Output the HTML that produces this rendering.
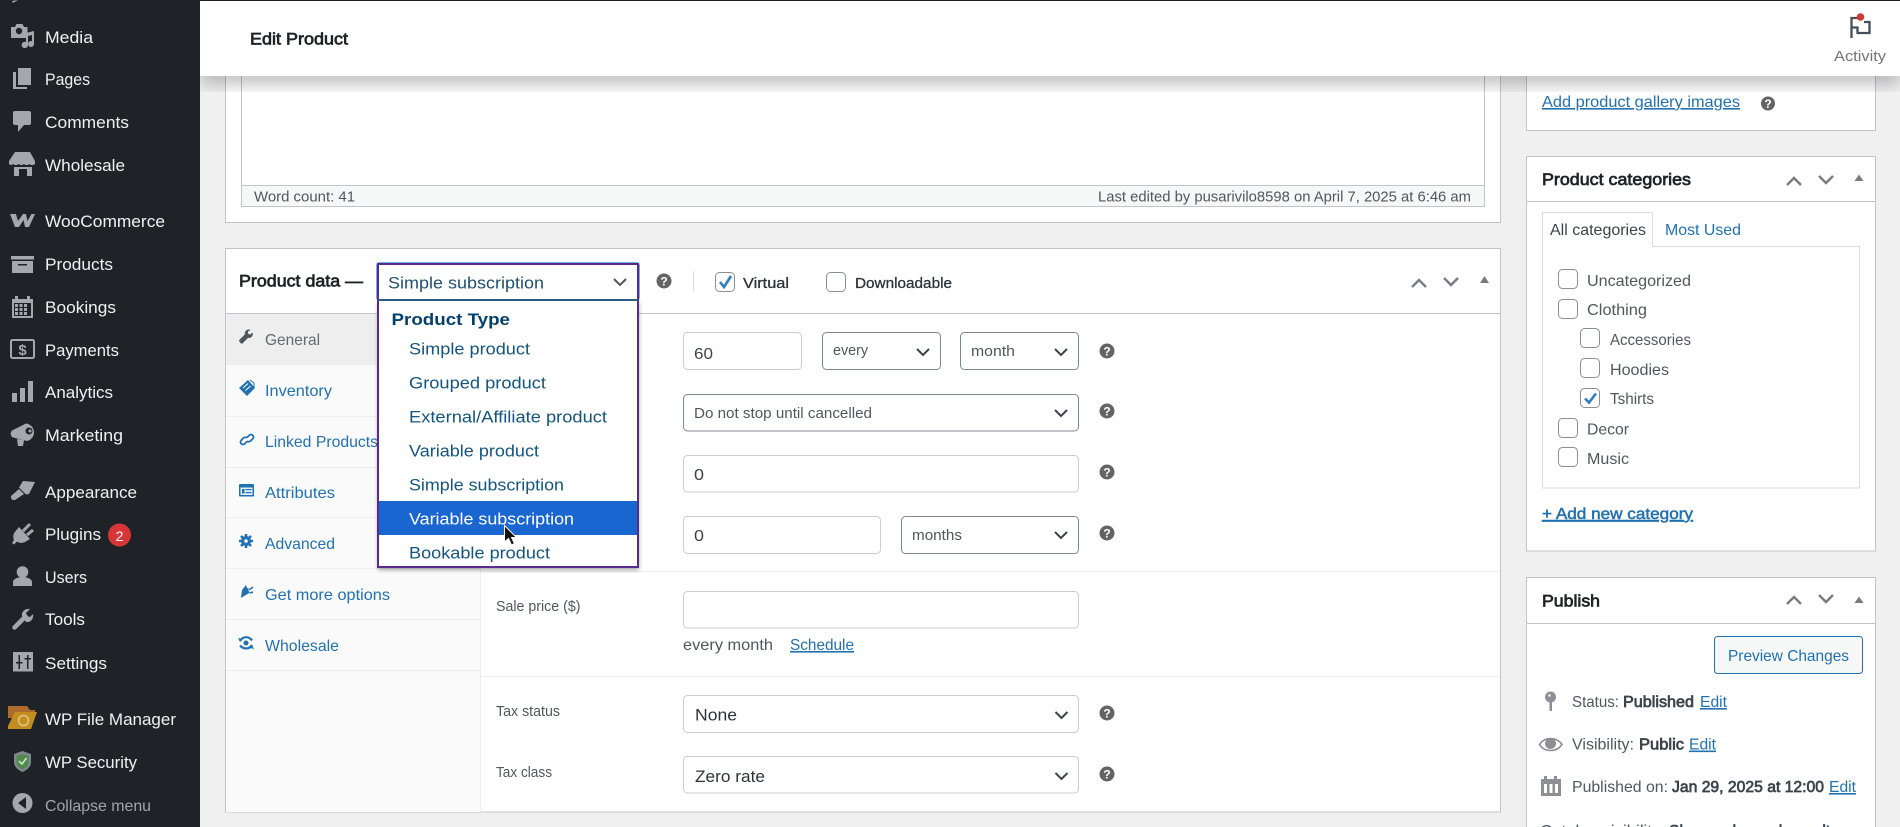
<!DOCTYPE html>
<html lang="en">
<head>
<meta charset="utf-8">
<title>Edit Product</title>
<style>
html,body{margin:0;padding:0;width:1900px;height:827px;overflow:hidden;background:#f0f0f1}
svg{display:block;font-family:"Liberation Sans",sans-serif}
.s{font-size:17px;fill:#f0f0f1}
.i{fill:#a4a8ac}
.d{fill:#1d2327}
.t{font-size:16px;fill:#2271b1}
.l{font-size:15px;fill:#50575e}
.v{font-size:16px;fill:#3c434a}
.h{font-size:17px;fill:#1d2327;stroke:#1d2327;stroke-width:.7px}
.o{font-size:17px;fill:#135580}
.c{font-size:16px;fill:#50575e}
.u{text-decoration:underline}
.b{fill:#3c434a;stroke:#3c434a;stroke-width:.7px}
.a{font-size:16px;fill:#2271b1}
.box{fill:#fff;stroke:#c3c4c7;stroke-width:1}
.inp{fill:#fff;stroke:#ccc;stroke-width:1}
.sel{fill:#fff;stroke:#7d8790;stroke-width:1}
.chev{fill:none;stroke:#3c434a;stroke-width:2}
.arr{fill:none;stroke:#787c82;stroke-width:2.4}
.tri{fill:#787c82}
.cb{fill:#fff;stroke:#8c8f94;stroke-width:1}
.chk{fill:none;stroke:#2f7fc1;stroke-width:2.6}
.hc{fill:#646464}
.q{font-size:12px;font-weight:700;fill:#fff;text-anchor:middle}
.ti{fill:#2271b1}
.sep{fill:#eeeeee}
</style>
</head>
<body>
<svg width="1900" height="827" viewBox="0 0 1900 827" xmlns="http://www.w3.org/2000/svg">
<defs>
<filter id="sh" x="-5%" y="-50%" width="110%" height="220%"><feGaussianBlur stdDeviation="9"/></filter>
<filter id="ds" x="-10%" y="-10%" width="120%" height="120%"><feGaussianBlur stdDeviation="2"/></filter>
</defs>
<rect width="1900" height="827" fill="#f0f0f1"/>

<!-- editor box -->
<rect class="box" x="225.5" y="20" width="1275" height="202.5"/>
<rect x="241.5" y="20" width="1243" height="186.5" fill="#fff" stroke="#c3c4c7"/>
<rect x="241.5" y="185.5" width="1243" height="21" fill="#f6f7f7" stroke="#c3c4c7"/>
<text x="254" y="201.5" font-size="15" fill="#50575e" textLength="101" lengthAdjust="spacingAndGlyphs">Word count: 41</text>
<text x="1098" y="201.5" font-size="15" fill="#50575e" textLength="373" lengthAdjust="spacingAndGlyphs">Last edited by pusarivilo8598 on April 7, 2025 at 6:46 am</text>

<!-- product data box -->
<rect class="box" x="225.5" y="248.5" width="1275" height="563.5"/>
<rect x="226" y="313" width="1274" height="1" fill="#c3c4c7"/>
<rect x="226" y="314" width="255" height="498" fill="#fafafa"/>
<rect x="480" y="314" width="1" height="498" fill="#eeeeee"/>
<rect x="226" y="314" width="255" height="51" fill="#eeeeee"/>
<rect class="sep" x="226" y="416" width="255" height="1"/>
<rect class="sep" x="226" y="467" width="255" height="1"/>
<rect class="sep" x="226" y="517" width="255" height="1"/>
<rect class="sep" x="226" y="568" width="255" height="1"/>
<rect class="sep" x="226" y="619" width="255" height="1"/>
<rect class="sep" x="226" y="670" width="255" height="1"/>
<rect class="sep" x="481" y="571" width="1019" height="1"/>
<rect class="sep" x="481" y="676" width="1019" height="1"/>

<text class="h" x="239" y="286.500" textLength="124" lengthAdjust="spacingAndGlyphs">Product data —</text>

<circle class="hc" cx="664" cy="281" r="7.5"/><text class="q" x="664" y="285.5">?</text>
<rect x="693" y="271" width="1" height="20" fill="#dcdcde"/>
<rect class="cb" x="715.5" y="272.5" width="19" height="19" rx="4"/>
<path class="chk" d="M720 282l4 5 7-11"/>
<text x="743" y="288" font-size="15" fill="#2c3338" stroke="#2c3338" stroke-width=".3" textLength="46" lengthAdjust="spacingAndGlyphs">Virtual</text>
<rect class="cb" x="826.5" y="272.5" width="19" height="19" rx="4"/>
<text x="855" y="288" font-size="15" fill="#2c3338" stroke="#2c3338" stroke-width=".3" textLength="97" lengthAdjust="spacingAndGlyphs">Downloadable</text>
<path class="arr" d="M1412 287l7-7 7 7"/>
<path class="arr" d="M1444 278l7 7 7-7"/>
<path class="tri" d="M1480 283l4.5-7 4.5 7z"/>

<!-- tabs -->
<path d="M240.5 342.500l1.500 1 6-6c2.500.7 5-1.500 4.500-4.500l-2.500 2-2-1-.5-2.500 2.500-1.500c-3-1-5.500 1.500-4.800 4.500l-6 6z" fill="#50575e" stroke="#50575e" stroke-width=".6"/>
<text x="265" y="345" font-size="16" fill="#646970" textLength="55" lengthAdjust="spacingAndGlyphs">General</text>

<path class="ti" d="M239 388l9-8 7 8-8 8z"/><path d="M250 380l4 3v5" fill="none" stroke="#2271b1"/>
<path d="M243 388l5-4.500M245.500 390.500l5-4.500" stroke="#fff" stroke-width="1"/>
<text class="t" x="265" y="396" textLength="67" lengthAdjust="spacingAndGlyphs">Inventory</text>

<path d="M247 437.500l2.500-2.500a2.500 2.500 0 0 1 3.500 3.500l-2.500 2.500a2.500 2.500 0 0 1-3.500 0M247 441.500l-2.500 2.500a2.500 2.500 0 0 1-3.500-3.500l2.500-2.500a2.500 2.500 0 0 1 3.500 0" fill="none" stroke="#2271b1" stroke-width="1.800"/>
<text class="t" x="265" y="447" textLength="113" lengthAdjust="spacingAndGlyphs">Linked Products</text>

<rect class="ti" x="239" y="484" width="15" height="12.500" rx="1"/>
<rect x="240.500" y="487.500" width="12" height="7.500" fill="#e6f0f7"/>
<rect class="ti" x="245.500" y="489" width="6" height="1.200"/><rect class="ti" x="245.500" y="492" width="6" height="1.200"/><rect class="ti" x="242" y="489" width="2.500" height="4.500"/>
<text class="t" x="265" y="498" textLength="70" lengthAdjust="spacingAndGlyphs">Attributes</text>

<circle class="ti" cx="246" cy="541" r="5"/>
<path d="M246 534v14M239 541h14M241 536l10 10M251 536l-10 10" stroke="#2271b1" stroke-width="2.600"/>
<circle cx="246" cy="541" r="1.800" fill="#fafafa"/>
<text class="t" x="265" y="549" textLength="70" lengthAdjust="spacingAndGlyphs">Advanced</text>

<path class="ti" d="M241 598l1-8 4-5 1 3 2 .5-1 1.500 2 2.500-5 3z"/><path d="M249 590l4-3M250 593l3-1" stroke="#2271b1" stroke-width="1.500"/>
<text class="t" x="265" y="600" textLength="125" lengthAdjust="spacingAndGlyphs">Get more options</text>

<path d="M240 641c3-5 9-5 12-.5M252 645c-3 5-9 4-12 .5" fill="none" stroke="#2271b1" stroke-width="2.200"/><circle class="ti" cx="246" cy="643" r="2.500"/>
<path class="ti" d="M238 638l4 1-2 3zM254 649l-4-1 2-3z"/>
<text class="t" x="265" y="651" textLength="74" lengthAdjust="spacingAndGlyphs">Wholesale</text>

<!-- fields -->
<rect class="inp" x="683.500" y="332.500" width="118" height="37" rx="4"/>
<text class="v" x="694" y="359" textLength="19" lengthAdjust="spacingAndGlyphs">60</text>
<rect class="sel" x="822.500" y="332.500" width="118" height="37" rx="4"/>
<text class="l" x="833" y="355" textLength="35" lengthAdjust="spacingAndGlyphs">every</text>
<path class="chev" d="M917 349l6 6 6-6"/>
<rect class="sel" x="960.500" y="332.500" width="118" height="37" rx="4"/>
<text class="l" x="971" y="356" textLength="44" lengthAdjust="spacingAndGlyphs">month</text>
<path class="chev" d="M1055 349l6 6 6-6"/>
<circle class="hc" cx="1107" cy="351" r="7.500"/><text class="q" x="1107" y="355.500">?</text>

<rect class="sel" x="683.500" y="394.500" width="395" height="36.500" rx="4"/>
<text class="l" x="694" y="418" textLength="178" lengthAdjust="spacingAndGlyphs">Do not stop until cancelled</text>
<path class="chev" d="M1055 410l6 6 6-6"/>
<circle class="hc" cx="1107" cy="411" r="7.500"/><text class="q" x="1107" y="415.500">?</text>

<rect class="inp" x="683.500" y="455.500" width="395" height="36.500" rx="4"/>
<text class="v" x="694" y="480" textLength="10" lengthAdjust="spacingAndGlyphs">0</text>
<circle class="hc" cx="1107" cy="472" r="7.500"/><text class="q" x="1107" y="476.500">?</text>

<rect class="inp" x="683.500" y="516.500" width="197" height="37" rx="4"/>
<text class="v" x="694" y="541" textLength="10" lengthAdjust="spacingAndGlyphs">0</text>
<rect class="sel" x="901.500" y="516.500" width="177" height="37" rx="4"/>
<text class="l" x="912" y="540" textLength="50" lengthAdjust="spacingAndGlyphs">months</text>
<path class="chev" d="M1055 532l6 6 6-6"/>
<circle class="hc" cx="1107" cy="533" r="7.500"/><text class="q" x="1107" y="537.500">?</text>

<text class="l" x="496" y="611" textLength="84.500" lengthAdjust="spacingAndGlyphs">Sale price ($)</text>
<rect class="inp" x="683.500" y="591.500" width="395" height="36.500" rx="4"/>
<text class="c" x="683" y="650" textLength="90" lengthAdjust="spacingAndGlyphs">every month</text>
<text class="a u" x="790" y="650" textLength="64" lengthAdjust="spacingAndGlyphs">Schedule</text>

<text class="l" x="496" y="716" textLength="64" lengthAdjust="spacingAndGlyphs">Tax status</text>
<rect class="inp" x="683.500" y="695.500" width="395" height="37" rx="4"/>
<text x="695" y="720.500" font-size="17" fill="#2c3338" textLength="42" lengthAdjust="spacingAndGlyphs">None</text>
<path class="chev" d="M1055.500 712l6 6 6-6"/>
<circle class="hc" cx="1107" cy="713" r="7.500"/><text class="q" x="1107" y="717.500">?</text>

<text class="l" x="496" y="777" textLength="56" lengthAdjust="spacingAndGlyphs">Tax class</text>
<rect class="inp" x="683.500" y="756.500" width="395" height="36.500" rx="4"/>
<text x="695" y="782" font-size="17" fill="#2c3338" textLength="70" lengthAdjust="spacingAndGlyphs">Zero rate</text>
<path class="chev" d="M1055.500 773l6 6 6-6"/>
<circle class="hc" cx="1107" cy="774" r="7.500"/><text class="q" x="1107" y="778.500">?</text>

<!-- select + dropdown -->
<rect x="378" y="303" width="261" height="267" fill="#000" opacity=".35" filter="url(#ds)"/>
<rect x="376.500" y="262.500" width="263" height="38" rx="3" fill="none" stroke="#72aee6" stroke-width="1"/>
<rect x="378" y="264" width="260" height="36" fill="#fff" stroke="#5a2a8c" stroke-width="2"/>
<rect x="378" y="299" width="260" height="2" fill="#2b5a85"/>
<text x="388" y="288.500" font-size="17" fill="#20506f" textLength="156" lengthAdjust="spacingAndGlyphs">Simple subscription</text>
<path fill="none" stroke="#50575e" stroke-width="2" d="M614 279l6 6 6-6"/>
<rect x="378" y="301" width="260" height="266" fill="#fff"/>
<path d="M378 301v266h260V301" fill="none" stroke="#5a2a8c" stroke-width="2"/>
<text x="391.500" y="325" font-size="17" font-weight="700" fill="#04406b" textLength="118.500" lengthAdjust="spacingAndGlyphs">Product Type</text>
<text class="o" x="409" y="354.500" textLength="121" lengthAdjust="spacingAndGlyphs">Simple product</text>
<text class="o" x="409" y="388.500" textLength="137" lengthAdjust="spacingAndGlyphs">Grouped product</text>
<text class="o" x="409" y="422.500" textLength="198" lengthAdjust="spacingAndGlyphs">External/Affiliate product</text>
<text class="o" x="409" y="456.500" textLength="130" lengthAdjust="spacingAndGlyphs">Variable product</text>
<text class="o" x="409" y="490.500" textLength="155" lengthAdjust="spacingAndGlyphs">Simple subscription</text>
<rect x="379" y="501" width="258" height="34" fill="#1a66d1"/>
<text x="409" y="524.500" font-size="17" fill="#fff" textLength="165" lengthAdjust="spacingAndGlyphs">Variable subscription</text>
<text class="o" x="409" y="558.500" textLength="141" lengthAdjust="spacingAndGlyphs">Bookable product</text>
<path d="M504.500 525.500v16.500l4-3.500 3 6.500 3-1.500-3-6h5z" fill="#111" stroke="#fff" stroke-width="1"/>

<!-- right col -->
<rect class="box" x="1526.500" y="20" width="349" height="110.500"/>
<text class="a u" x="1542" y="107" textLength="198" lengthAdjust="spacingAndGlyphs">Add product gallery images</text>
<circle class="hc" cx="1768" cy="103.500" r="7"/><text class="q" x="1768" y="108">?</text>

<rect class="box" x="1526.500" y="156.500" width="349" height="394.500"/>
<rect x="1527" y="201" width="348" height="1" fill="#c3c4c7"/>
<text class="h" x="1542" y="185" textLength="149" lengthAdjust="spacingAndGlyphs">Product categories</text>
<path class="arr" d="M1787 185l7-7 7 7"/>
<path class="arr" d="M1819 176l7 7 7-7"/>
<path class="tri" d="M1854.500 181l4.500-6.500 4.500 6.500z"/>
<rect x="1542.500" y="246.500" width="317" height="241.500" fill="#fff" stroke="#dcdcde"/>
<path d="M1542.500 247v-34.500h110v34.500" fill="#fff" stroke="#dcdcde"/>
<text x="1550" y="235" font-size="16" fill="#3c434a" textLength="96" lengthAdjust="spacingAndGlyphs">All categories</text>
<text class="t" x="1665" y="235" textLength="76" lengthAdjust="spacingAndGlyphs">Most Used</text>

<rect class="cb" x="1558.500" y="269.500" width="19" height="19" rx="4"/>
<text class="c" x="1587" y="286" textLength="104" lengthAdjust="spacingAndGlyphs">Uncategorized</text>
<rect class="cb" x="1558.500" y="299.500" width="19" height="19" rx="4"/>
<text class="c" x="1587" y="315" textLength="60" lengthAdjust="spacingAndGlyphs">Clothing</text>
<rect class="cb" x="1580.500" y="328.500" width="19" height="19" rx="4"/>
<text class="c" x="1610" y="345" textLength="81" lengthAdjust="spacingAndGlyphs">Accessories</text>
<rect class="cb" x="1580.500" y="358.500" width="19" height="19" rx="4"/>
<text class="c" x="1610" y="375" textLength="59" lengthAdjust="spacingAndGlyphs">Hoodies</text>
<rect class="cb" x="1580.500" y="388.500" width="19" height="19" rx="4"/>
<path class="chk" d="M1585 398.500l4 4 7-9"/>
<text class="c" x="1610" y="404" textLength="44" lengthAdjust="spacingAndGlyphs">Tshirts</text>
<rect class="cb" x="1558.500" y="418.500" width="19" height="19" rx="4"/>
<text class="c" x="1587" y="434.500" textLength="42" lengthAdjust="spacingAndGlyphs">Decor</text>
<rect class="cb" x="1558.500" y="447.500" width="19" height="19" rx="4"/>
<text class="c" x="1587" y="464" textLength="42" lengthAdjust="spacingAndGlyphs">Music</text>
<text x="1542" y="519" font-size="16" fill="#2271b1" stroke="#2271b1" stroke-width=".5" class="u" textLength="151" lengthAdjust="spacingAndGlyphs">+ Add new category</text>

<rect class="box" x="1526.500" y="577.500" width="349" height="270"/>
<rect x="1527" y="623" width="348" height="1" fill="#c3c4c7"/>
<text class="h" x="1542" y="606.500" textLength="58" lengthAdjust="spacingAndGlyphs">Publish</text>
<path class="arr" d="M1787 604l7-7 7 7"/>
<path class="arr" d="M1819 595l7 7 7-7"/>
<path class="tri" d="M1854.500 603l4.500-6.500 4.500 6.500z"/>
<rect x="1714.500" y="636.500" width="148" height="37" rx="3" fill="#f6f7f7" stroke="#2271b1"/>
<text class="t" x="1728" y="661" textLength="121" lengthAdjust="spacingAndGlyphs">Preview Changes</text>

<circle cx="1550.500" cy="697" r="5.500" fill="#8c8f94"/><rect x="1549.500" y="700" width="2.500" height="11" fill="#8c8f94"/><circle cx="1549.500" cy="695.500" r="1.200" fill="#fff"/>
<text class="c" x="1572" y="707" textLength="47" lengthAdjust="spacingAndGlyphs">Status:</text>
<text class="c b" x="1623" y="707" textLength="71" lengthAdjust="spacingAndGlyphs">Published</text>
<text class="a u" x="1700" y="707" textLength="27" lengthAdjust="spacingAndGlyphs">Edit</text>

<path d="M1539.500 744.500c5-8 17-8 22.500 0c-5.500 8-17.500 8-22.500 0z" fill="none" stroke="#8c8f94" stroke-width="1.600"/><circle cx="1550.500" cy="743.500" r="5.500" fill="#8c8f94"/>
<text class="c" x="1572" y="749.500" textLength="62" lengthAdjust="spacingAndGlyphs">Visibility:</text>
<text class="c b" x="1639" y="749.500" textLength="45" lengthAdjust="spacingAndGlyphs">Public</text>
<text class="a u" x="1689" y="749.500" textLength="27" lengthAdjust="spacingAndGlyphs">Edit</text>

<path d="M1541 779h3v-3h3v3h7v-3h3v3h4v17h-20z" fill="#8c8f94"/><path d="M1544 784h3v9h-3zM1549.500 784h3v9h-3zM1555 784h3v9h-3z" fill="#fff"/>
<text class="c" x="1572" y="792" textLength="96" lengthAdjust="spacingAndGlyphs">Published on:</text>
<text class="c b" x="1672" y="792" textLength="152" lengthAdjust="spacingAndGlyphs">Jan 29, 2025 at 12:00</text>
<text class="a u" x="1829" y="792" textLength="27" lengthAdjust="spacingAndGlyphs">Edit</text>

<text class="c" x="1540" y="836" textLength="125" lengthAdjust="spacingAndGlyphs">Catalog visibility:</text>
<text class="c b" x="1669" y="836" textLength="169" lengthAdjust="spacingAndGlyphs">Shop and search results</text>

<!-- top bar -->
<rect x="200" y="68" width="1700" height="14" fill="#000" opacity=".34" filter="url(#sh)"/>
<rect x="200" y="0" width="1700" height="76" fill="#fff"/>
<rect x="200" y="0" width="1700" height="1" fill="#1d2327"/>
<text class="h" x="250" y="44.500" textLength="98" lengthAdjust="spacingAndGlyphs">Edit Product</text>
<path d="M1851.500 38V18h8M1864 22h5.500v11h-12v-5.500h-6" fill="none" stroke="#454f59" stroke-width="2.300"/>
<circle cx="1860.500" cy="17" r="3.800" fill="#d63638"/>
<text x="1834" y="61" font-size="15" fill="#757575" textLength="52" lengthAdjust="spacingAndGlyphs">Activity</text>

<!-- sidebar -->
<rect x="0" y="0" width="200" height="827" fill="#1f2327"/>
<path class="i" d="M12 1l6-1-5 3z"/>

<path class="i" d="M11 27h4l1.500-3h6l1.500 3h3.500v11H11z"/><circle class="d" cx="19" cy="31" r="3.200"/>
<path class="i" d="M26 33l8-2v13a3 3 0 1 1-2-2.800V35l-4 1v9a3.200 3.200 0 1 1-2-3z"/>
<text class="s" x="45" y="43" textLength="48" lengthAdjust="spacingAndGlyphs">Media</text>

<path class="i" d="M18 68h13v17H18z"/><path class="i" d="M13 72h3v15h11v2H13z"/>
<text class="s" x="45" y="85" textLength="45" lengthAdjust="spacingAndGlyphs">Pages</text>

<path class="i" d="M15 111h14a2 2 0 0 1 2 2v10a2 2 0 0 1-2 2h-5l-6 7v-7h-3a2 2 0 0 1-2-2v-10a2 2 0 0 1 2-2z"/>
<text class="s" x="45" y="128" textLength="84" lengthAdjust="spacingAndGlyphs">Comments</text>

<path class="i" d="M15 152h15l5 9v3c-2 1.500-4 1.500-5.500 0-2 1.500-4 1.500-5.500 0-2 1.500-3.500 1.500-5.500 0-2 1.500-3.500 1.500-5.500 0-1.500 1.500-3 1-4 0v-3z"/>
<path class="i" d="M14 167h18v9h-5v-7h-8v7h-5z"/>
<text class="s" x="45" y="171" textLength="80" lengthAdjust="spacingAndGlyphs">Wholesale</text>

<path class="i" d="M10 214h6l2 7 5-7h3l1.500 7 4-7h3.500l-6 13h-4l-1.500-7-4.500 7h-4z"/>
<text class="s" x="45" y="227" textLength="120" lengthAdjust="spacingAndGlyphs">WooCommerce</text>

<rect class="i" x="11" y="256" width="23" height="3.500"/><rect class="i" x="12" y="261" width="21" height="12"/><rect class="d" x="18" y="264" width="9" height="1.500"/>
<text class="s" x="45" y="270" textLength="68" lengthAdjust="spacingAndGlyphs">Products</text>

<path class="i" d="M12 299h3v-3h3v3h9v-3h3v3h3v19H12z"/><rect class="d" x="14" y="303" width="17" height="13"/>
<path class="i" d="M15 304h3v3h-3zM19.500 304h3v3h-3zM24 304h3v3h-3zM15 308h3v3h-3zM19.500 308h3v3h-3zM24 308h3v3h-3zM15 312h3v3h-3zM19.500 312h3v3h-3zM24 312h3v3h-3z"/>
<text class="s" x="45" y="313" textLength="71" lengthAdjust="spacingAndGlyphs">Bookings</text>

<rect x="11" y="340" width="23" height="18" rx="1.500" fill="none" stroke="#a4a8ac" stroke-width="2"/>
<text x="22.500" y="355" font-size="15" font-weight="700" fill="#a4a8ac" text-anchor="middle">$</text>
<text class="s" x="45" y="356" textLength="74" lengthAdjust="spacingAndGlyphs">Payments</text>

<rect class="i" x="12" y="393" width="5" height="9"/><rect class="i" x="20" y="388" width="5" height="14"/><rect class="i" x="28" y="381" width="5" height="21"/>
<text class="s" x="45" y="398" textLength="68" lengthAdjust="spacingAndGlyphs">Analytics</text>

<path class="i" d="M13 430l13-6.500a9 9 0 0 1 8 8.500 9 9 0 0 1-7 9l-14-3.500a4.200 4.200 0 0 1 0-7.500z"/>
<circle class="d" cx="29" cy="431" r="3.500"/><circle class="i" cx="30" cy="431" r="1.500"/>
<path class="i" d="M17 439l7 1-1 6h-5z"/>
<text class="s" x="45" y="441" textLength="78" lengthAdjust="spacingAndGlyphs">Marketing</text>

<path class="i" d="M23 481l12 1-6 12-3 .500-7-7z"/><path class="i" d="M19 489l5 5-9 6c-3 .5-4.500-1.500-4-4z"/>
<text class="s" x="45" y="498" textLength="92" lengthAdjust="spacingAndGlyphs">Appearance</text>

<path class="i" d="M19 527l11 12-5 3c-3 1.500-6 1-8-.5l-3 3-2-1.500 2-3c-1-2-1-5 .5-7.500z"/>
<path d="M23 531l7-7M27 535l6-5" stroke="#a4a8ac" stroke-width="3"/>
<text class="s" x="45" y="540" textLength="56" lengthAdjust="spacingAndGlyphs">Plugins</text>
<circle cx="119.500" cy="535" r="11.500" fill="#d63638"/>
<text x="119.500" y="541" font-size="14" fill="#fff" text-anchor="middle">2</text>

<circle class="i" cx="22.500" cy="572" r="5.800"/><path class="i" d="M13 586v-4c0-3 5-5 9.500-5s9.500 2 9.500 5v4z"/>
<text class="s" x="45" y="583" textLength="42" lengthAdjust="spacingAndGlyphs">Users</text>

<path d="M14.500 627.500l11-11" stroke="#a4a8ac" stroke-width="4.500" stroke-linecap="round"/>
<path class="i" d="M22 616c-1-4 3-8 8-7l-4 4 1 3 3 1 3-3c1 4-2 9-7 8z"/>
<text class="s" x="45" y="625" textLength="40" lengthAdjust="spacingAndGlyphs">Tools</text>

<rect class="i" x="13" y="652" width="20" height="19.500"/>
<path class="d" d="M18.500 655h1.500v14h-1.500zM16 662h6.500v1.500H16zM27 655h1.500v14H27zM24.500 658h6.500v1.500h-6.500z"/>
<text class="s" x="45" y="669" textLength="62" lengthAdjust="spacingAndGlyphs">Settings</text>

<path d="M8 706h19l3 4h5v8H8z" fill="#ac6c2c"/>
<path d="M15 712h22l-6 17H8v-3z" fill="#c38d1f"/>
<circle cx="23.500" cy="720.500" r="5" fill="none" stroke="#dec685" stroke-width="1.500"/>
<text class="s" x="45" y="725" textLength="131" lengthAdjust="spacingAndGlyphs">WP File Manager</text>

<path d="M22.500 751l8.500 3v8c0 5-4 8-8.500 10-4.500-2-8.500-5-8.500-10v-8z" fill="#7f868d"/>
<path d="M22.500 754l6 2v6c0 4-3 6-6 7.500-3-1.500-6-3.500-6-7.500v-6z" fill="#4f8c4c"/>
<path d="M19 761l3 3 4.500-6" fill="none" stroke="#d9e8d6" stroke-width="1.500"/>
<text class="s" x="45" y="768" textLength="92" lengthAdjust="spacingAndGlyphs">WP Security</text>

<circle class="i" cx="22.500" cy="803" r="10"/><path class="d" d="M26 797v12l-8-6z"/>
<text x="45" y="811" font-size="16" fill="#a0a5aa" textLength="106" lengthAdjust="spacingAndGlyphs">Collapse menu</text>
</svg>
</body>
</html>
